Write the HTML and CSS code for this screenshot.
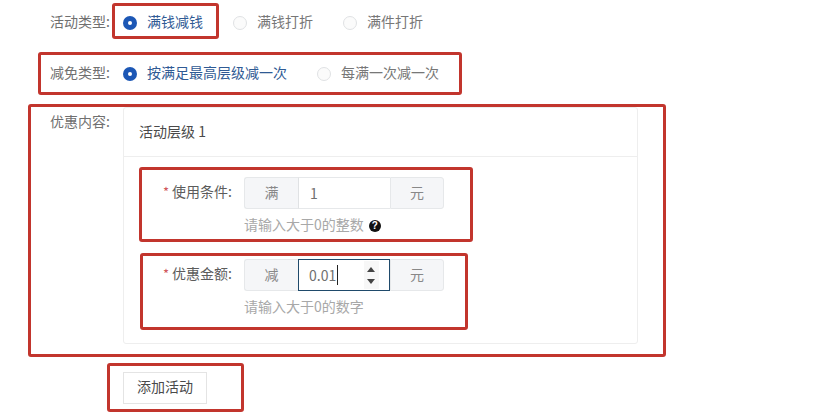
FILE: index.html
```html
<!DOCTYPE html>
<html lang="zh-CN">
<head>
<meta charset="utf-8">
<title>添加活动</title>
<link rel="stylesheet" href="styles.css">
</head>
<body>
<main class="page">
  <div class="row row-type">
    <div class="row-label">活动类型:</div>
    <div class="radios">
      <label class="radio radio-on radio-w1"><i class="dot"></i><span>满钱减钱</span></label>
      <label class="radio radio-off radio-w2"><i class="dot"></i><span>满钱打折</span></label>
      <label class="radio radio-off"><i class="dot"></i><span>满件打折</span></label>
    </div>
  </div>
  <div class="row row-reduce">
    <div class="row-label">减免类型:</div>
    <div class="radios">
      <label class="radio radio-on radio-w3"><i class="dot"></i><span>按满足最高层级减一次</span></label>
      <label class="radio radio-off"><i class="dot"></i><span>每满一次减一次</span></label>
    </div>
  </div>
  <div class="row row-content">
    <div class="row-label label-top">优惠内容:</div>
    <section class="card">
      <header class="card-head">活动层级 1</header>
      <div class="card-body">
        <div class="field">
          <div class="field-label"><em>*</em>使用条件:</div>
          <div class="field-main">
            <div class="group">
              <span class="addon">满</span>
              <span class="input">1</span>
              <span class="addon">元</span>
            </div>
            <p class="help">请输入大于0的整数<span class="q">?</span></p>
          </div>
        </div>
        <div class="field">
          <div class="field-label"><em>*</em>优惠金额:</div>
          <div class="field-main">
            <div class="group">
              <span class="addon">减</span>
              <span class="input input-focus"><span class="caret">0.01</span>
                <span class="spin"><i class="up"></i><i class="down"></i></span>
              </span>
              <span class="addon">元</span>
            </div>
            <p class="help">请输入大于0的数字</p>
          </div>
        </div>
      </div>
    </section>
  </div>
  <div class="row row-action">
    <button class="btn" type="button">添加活动</button>
  </div>
</main>
<div class="mark mark-1"></div>
<div class="mark mark-2"></div>
<div class="mark mark-3"></div>
<div class="mark mark-4"></div>
<div class="mark mark-5"></div>
<div class="mark mark-6"></div>
</body>
</html>
```
FILE: styles.css
```css
* { box-sizing: border-box; }
html, body { margin: 0; padding: 0; background: #fff; }
body {
  width: 814px;
  height: 418px;
  overflow: hidden;
  position: relative;
  font-family: "Noto Sans CJK SC", "Liberation Sans", sans-serif;
  font-size: 14px;
  color: #666;
}
.page { width: 814px; }
.row { display: flex; align-items: center; }
.row-type { height: 46px; }
.row-reduce { height: 47px; margin-top: 4px; }
.row-content { align-items: flex-start; margin-top: 10px; }
.row-action { margin-top: 28px; padding-left: 123px; }
.row-label { width: 110px; margin-right: 13px; margin-bottom: 4px; text-align: right; line-height: 20px; color: #707070; white-space: nowrap; }
.label-top { padding-top: 4px; margin-bottom: 0; }
.radios { display: flex; align-items: center; }
.radio { display: flex; align-items: center; line-height: 20px; }
.radio span { margin-bottom: 4px; }
.radio-w1 { width: 110px; }
.radio-w2 { width: 110px; }
.radio-w3 { width: 194px; }
.dot { display: block; width: 14px; height: 14px; border-radius: 50%; margin-right: 10px; flex: none; }
.radio-on { color: #2f5a94; }
.radio-on .dot { background: #1c57b5; position: relative; }
.radio-on .dot::after { content: ""; position: absolute; left: 5px; top: 5px; width: 4px; height: 4px; border-radius: 50%; background: #fff; }
.radio-off .dot { border: 1px solid #e0e2e4; background: #fbfbfb; }
.radio-off { color: #777; }
.card { width: 515px; height: 237px; border: 1px solid #eeeeee; border-radius: 3px; }
.card-head { height: 49px; line-height: 46px; padding-left: 15px; color: #4a4a4a; border-bottom: 1px solid #eeeeee; }
.card-body { padding-top: 20px; display: flex; flex-direction: column; gap: 18px; }
.field { display: flex; }
.field-label { width: 108px; margin-right: 12px; height: 32px; line-height: 29px; text-align: right; color: #5c5c5c; white-space: nowrap; }
.field-label em { color: #d0565a; font-style: normal; margin-right: 3px; font-size: 13px; }
.group { display: flex; width: 200px; height: 32px; }
.addon { width: 54px; height: 32px; line-height: 28px; text-align: center; background: #f5f6f8; border: 1px solid #e6e8ea; color: #888; }
.addon:first-child { border-radius: 3px 0 0 3px; border-right: 0; }
.addon:last-child { border-radius: 0 3px 3px 0; border-left: 1px solid #e6e8ea; }
.input { width: 92px; height: 32px; line-height: 30px; padding-left: 11px; border: 1px solid #e6e8ea; border-left: 1px solid #e0e2e4; border-right: 0; color: #707070; position: relative; display: block; }
.input-focus { border: 1px solid #1f4a6b; padding-left: 10px; }
.caret { border-right: 1px solid #222; padding-right: 1px; display: inline-block; line-height: 20px; }
.spin { position: absolute; right: 10px; top: 1px; width: 15px; height: 28px; background: #f7f7f7; }
.up, .down { position: absolute; left: 3px; width: 0; height: 0; border-left: 4.5px solid transparent; border-right: 4.5px solid transparent; }
.up { top: 6px; border-bottom: 5px solid #444; }
.down { bottom: 5px; border-top: 5px solid #444; }
.help { margin: 0; height: 32px; line-height: 28px; color: #a8a8a8; display: flex; align-items: center; }
.help { padding-bottom: 2px; }
.q { width: 12px; height: 12px; border-radius: 50%; background: #111; color: #fff; font: bold 10px/12px "Liberation Sans", sans-serif; text-align: center; margin-left: 5px; margin-top: 3px; }
.btn { display: block; width: 84px; height: 32px; padding: 0 0 5px; background: #fff; border: 1px solid #e4e4e4; font: inherit; color: #4a4a4a; line-height: 24px; }
.mark { position: absolute; border: 3px solid #c2352d; border-radius: 3px; pointer-events: none; }
.mark-1 { left: 112px; top: 3px; width: 107px; height: 36px; }
.mark-2 { left: 38px; top: 52px; width: 424px; height: 43px; }
.mark-3 { left: 28px; top: 104px; width: 638px; height: 253px; }
.mark-4 { left: 139px; top: 167px; width: 334px; height: 75px; }
.mark-5 { left: 140px; top: 253px; width: 328px; height: 77px; }
.mark-6 { left: 107px; top: 363px; width: 137px; height: 49px; }
```
